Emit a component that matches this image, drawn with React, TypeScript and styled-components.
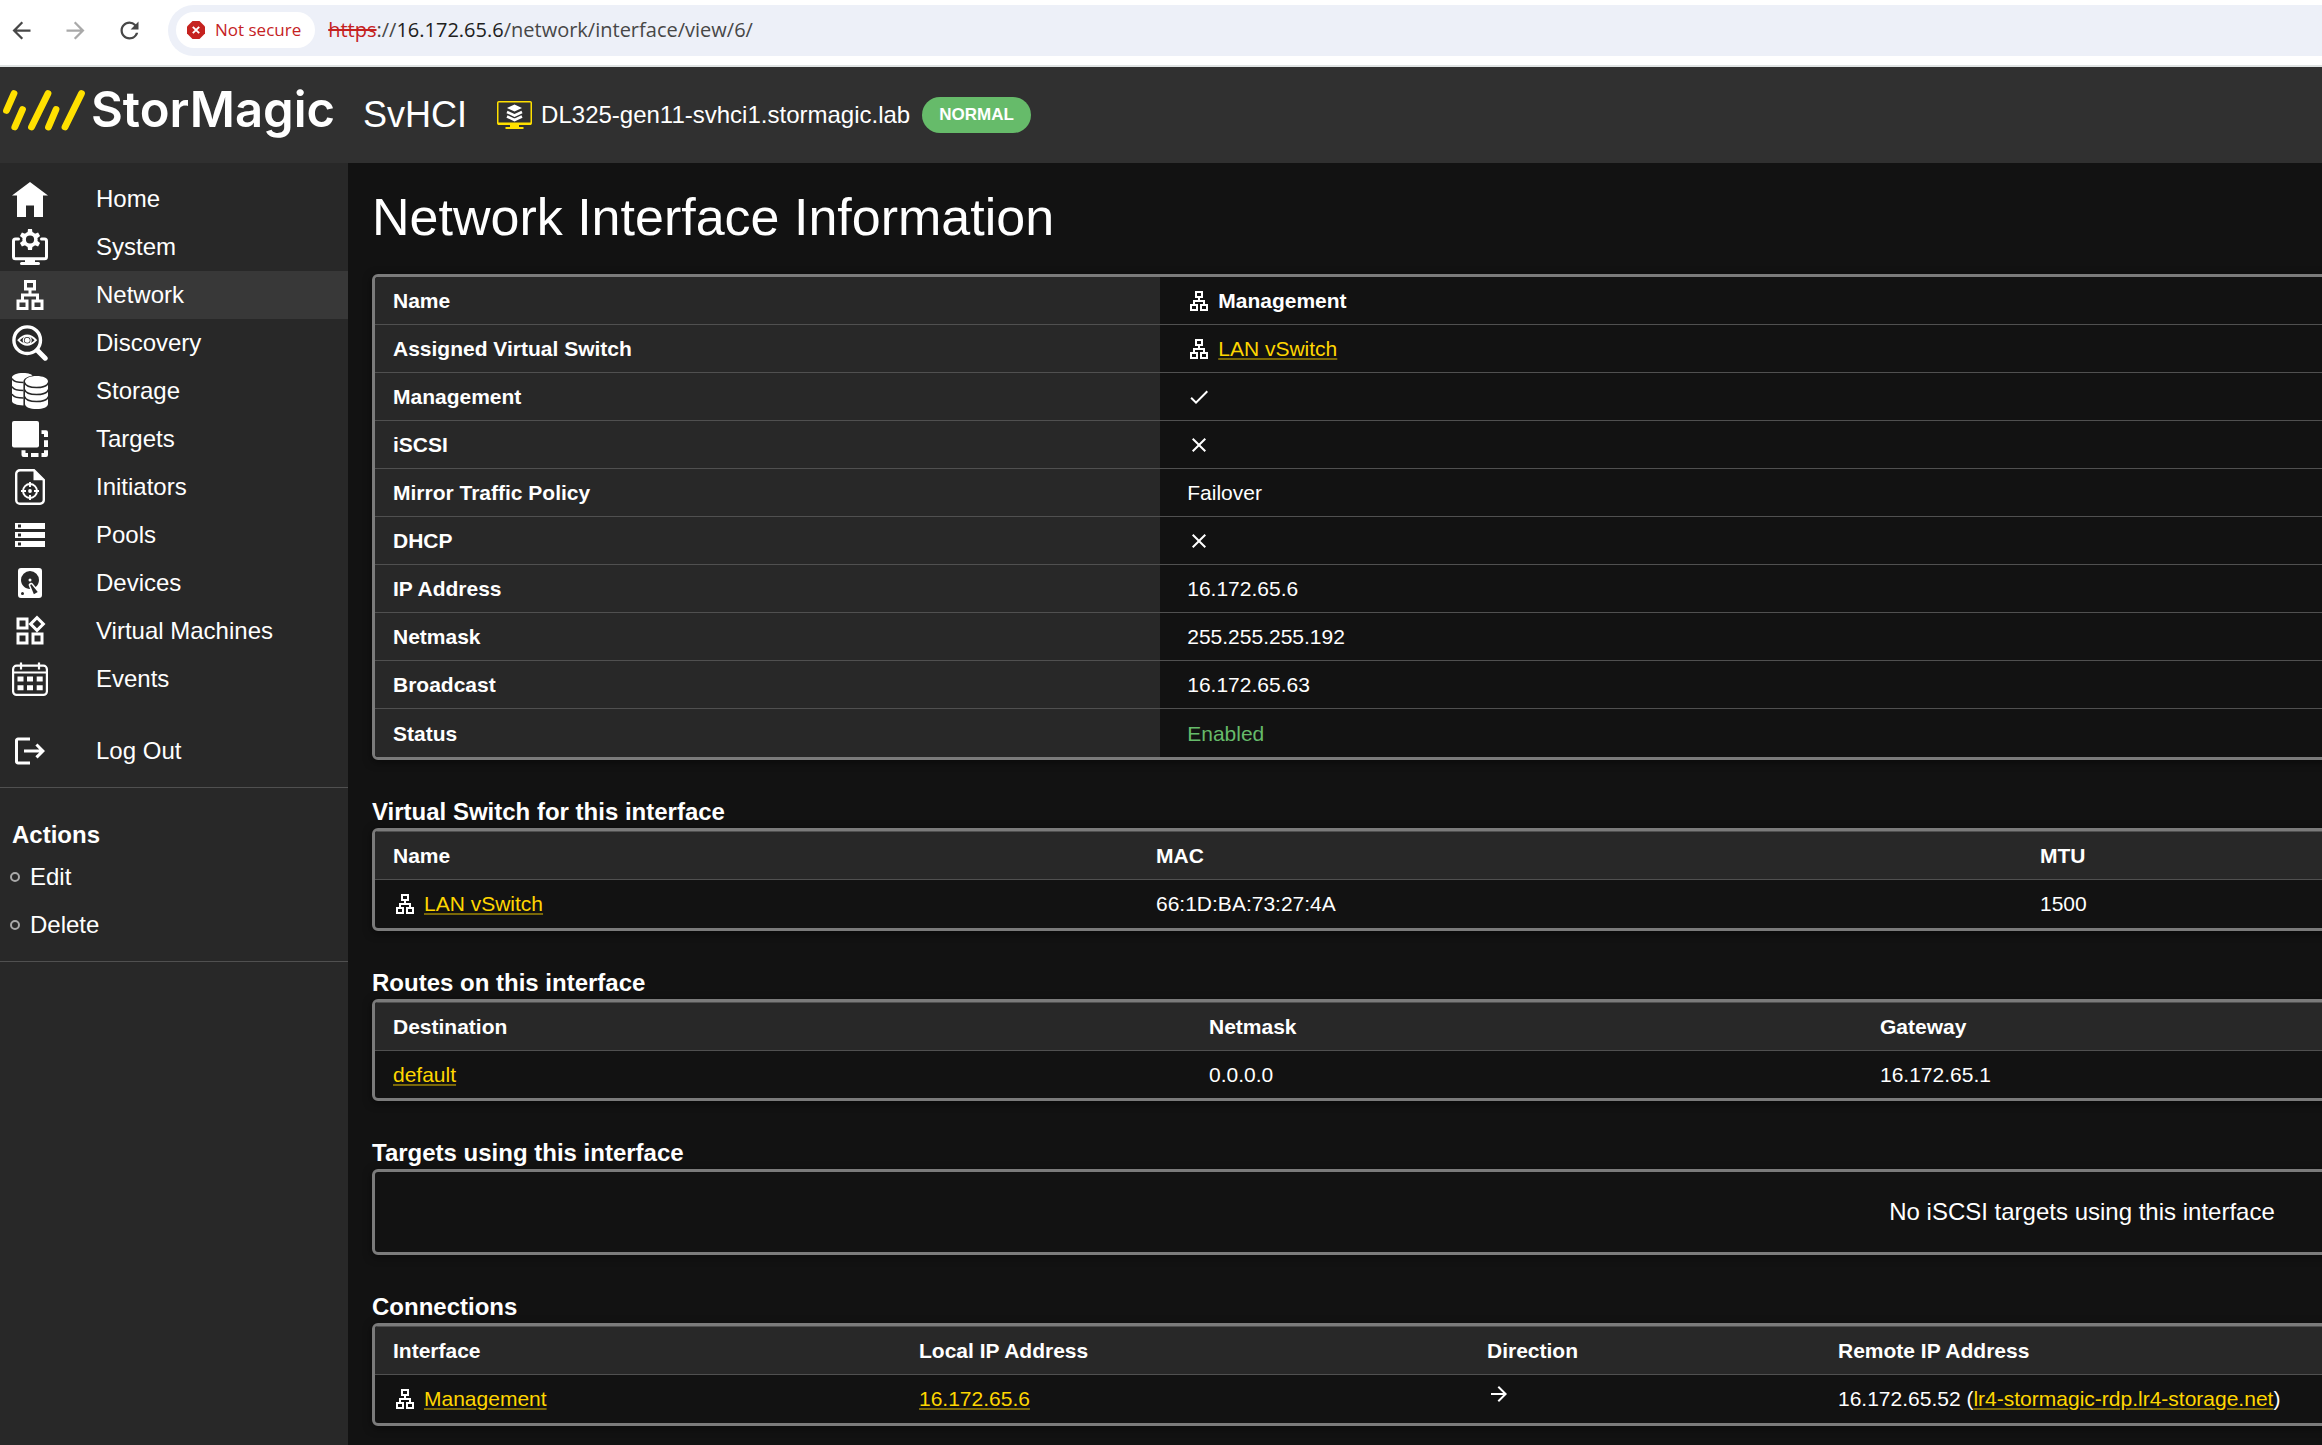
import React from "react";
import styled, { createGlobalStyle } from "styled-components";
import {
  MdArrowBack,
  MdArrowForward,
  MdCheck,
  MdClose,
  MdLogout,
  MdOutlineLan,
  MdOutlineWidgets,
  MdRefresh,
  MdStorage,
} from "react-icons/md";

const color = {
  page: "#121212",
  panel: "#282828",
  header: "#303030",
  active: "#383838",
  line: "#505050",
  frame: "#7b7b7b",
  brand: "#ffe000",
  link: "#ffd600",
  linkLine: "#7a6808",
  ok: "#66bb6a",
  danger: "#c5221f",
};

const sans = `"Liberation Sans", Arial, sans-serif`;

const GlobalStyle = createGlobalStyle`
  *, *::before, *::after { box-sizing: border-box; }
  body {
    margin: 0;
    background: ${color.page};
    color: #fff;
    font: 24px/28px ${sans};
  }
  svg { display: block; flex: none; }
`;

const Page = styled.div`
  display: flex;
  flex-direction: column;
  min-height: 100vh;
`;

/* Browser toolbar */

const BrowserBar = styled.div`
  display: flex;
  align-items: center;
  height: 67px;
  padding: 0 0 5px 8px;
  background: #fff;
  border-bottom: 2px solid #dfe3e3;
  font-family: "Open Sans", "Noto Sans", sans-serif;
`;

const ToolButton = styled.button<{ $dim?: boolean }>`
  display: grid;
  place-items: center;
  width: 27px;
  height: 27px;
  margin-right: 27px;
  padding: 0;
  border: 0;
  background: none;
  color: ${(p) => (p.$dim ? "#a9a9a9" : "#474747")};
`;

const AddressBar = styled.div`
  display: flex;
  flex: 1;
  align-items: center;
  gap: 13px;
  height: 51px;
  margin-left: -2px;
  padding-left: 8px;
  border-radius: 26px 0 0 26px;
  background: #edf0f8;
`;

const SecurityChip = styled.button`
  display: flex;
  align-items: center;
  gap: 10px;
  height: 36px;
  padding: 0 14px 0 11px;
  border: 0;
  border-radius: 18px;
  background: #fff;
  color: ${color.danger};
  font: 17px/24px "Open Sans", "Noto Sans", sans-serif;
`;

const Address = styled.div`
  color: #474747;
  font-size: 20px;
  line-height: 28px;
  white-space: nowrap;
`;

const BadScheme = styled.span`
  color: ${color.danger};
  text-decoration: line-through;
`;

const Host = styled.span`
  color: #202020;
`;

/* Product header */

const Header = styled.header`
  display: flex;
  align-items: center;
  height: 96px;
  background: ${color.header};
  white-space: nowrap;
`;

const Brand = styled.a`
  display: flex;
  align-items: center;
  gap: 3px;
  margin-right: 28px;
  padding-bottom: 10px;
  color: #fff;
  font: 600 49px/64px Inter, "Liberation Sans", sans-serif;
  text-decoration: none;
`;

const Product = styled.span`
  margin-right: 30px;
  font-size: 36px;
  line-height: 42px;
`;

const HostName = styled.span`
  margin: 0 12px 0 8px;
`;

const Badge = styled.span`
  padding: 0 17px;
  border-radius: 18px;
  background: ${color.ok};
  font-size: 17px;
  font-weight: 700;
  line-height: 36px;
`;

/* Body layout */

const Body = styled.div`
  display: flex;
  flex: 1;
`;

const Sidebar = styled.aside`
  flex: none;
  width: 348px;
  background: ${color.panel};
`;

const NavGroup = styled.ul`
  margin: 0;
  padding: 12px 0;
  border-bottom: 1px solid ${color.line};
  list-style: none;
`;

const NavItem = styled.li<{ $spaced?: boolean }>`
  margin-top: ${(p) => (p.$spaced ? 24 : 0)}px;
`;

const NavLink = styled.a<{ $active?: boolean }>`
  display: flex;
  align-items: center;
  gap: 48px;
  height: 48px;
  padding-left: 12px;
  background: ${(p) => (p.$active ? color.active : "none")};
  color: #fff;
  text-decoration: none;
`;

const Actions = styled.section`
  padding: 29px 0 12px;
  border-bottom: 1px solid ${color.line};
`;

const ActionsTitle = styled.h2`
  margin: 0;
  padding-left: 12px;
  font-size: 24px;
  line-height: 36px;
`;

const ActionList = styled.ul`
  margin: 0;
  padding: 0;
  list-style: none;
`;

const ActionLink = styled.a`
  display: flex;
  align-items: center;
  gap: 10px;
  height: 48px;
  padding-left: 10px;
  color: #fff;
  text-decoration: none;

  &::before {
    content: "";
    width: 10px;
    height: 10px;
    border: 2px solid #a8a8a8;
    border-radius: 50%;
  }
`;

const Main = styled.main`
  flex: 1;
  min-width: 0;
  overflow-x: auto;
  scrollbar-width: none;
  padding: 24px;
`;

/* The tables are laid out for an ultra-wide console and scroll sideways. */
const Content = styled.div`
  display: flex;
  flex-direction: column;
  min-width: 3420px;
`;

const Title = styled.h1`
  margin: 0 0 27px;
  font-size: 52px;
  font-weight: 400;
  line-height: 60px;
`;

const Section = styled.section`
  margin-top: 36px;
`;

const SectionTitle = styled.h2`
  margin: 0;
  font-size: 24px;
  line-height: 32px;
`;

const Frame = styled.div`
  overflow: hidden;
  border: 3px solid ${color.frame};
  border-radius: 6px;
  box-shadow: 0 2px 8px rgba(0, 0, 0, 0.5);
`;

const Table = styled.table`
  width: 100%;
  border-collapse: separate;
  border-spacing: 0;
  table-layout: fixed;
  font-size: 21px;
  line-height: 23px;
  text-align: left;
`;

const DetailLabel = styled.th`
  width: 23%;
  height: 48px;
  padding: 0 18px;
  border-bottom: 1px solid ${color.line};
  background: ${color.panel};

  tr:last-child > & { border-bottom: 0; }
`;

const DetailValue = styled.td`
  height: 48px;
  padding: 12px 27px 0;
  border-bottom: 1px solid ${color.line};
  vertical-align: top;

  tr:last-child > & {
    padding-top: 0;
    border-bottom: 0;
    vertical-align: middle;
  }
`;

const HeadCell = styled.th<{ $width?: number }>`
  width: ${(p) => (p.$width ? `${p.$width}px` : "auto")};
  height: 49px;
  padding: 0 18px;
  border: solid ${color.line};
  border-width: 1px 0;
  background: ${color.panel};
`;

const Cell = styled.td`
  padding: 12px 18px;
  vertical-align: top;
`;

const Empty = styled.p`
  margin: 0;
  line-height: 80px;
  text-align: center;
`;

const IconText = styled.span`
  display: flex;
  align-items: flex-start;
  gap: 7px;
  height: 24px;
`;

const InlineArrow = styled(MdArrowForward)`
  display: inline-block;
  vertical-align: baseline;
`;

const ArrowCell = styled(Cell)`
  padding-block: 7px;
`;

const TextLink = styled.a`
  color: ${color.link};
  text-decoration: underline 2px ${color.linkLine};
  text-underline-offset: 2px;
`;

const Enabled = styled.span`
  color: ${color.ok};
`;

/* Drawings */

const NotSecureIcon = () => (
  <svg width="18" height="18" viewBox="0 0 18 18" aria-hidden="true">
    <path d="M5.500 0h7L18 5.500v7L12.500 18h-7L0 12.500v-7z" fill={color.danger} />
    <path d="M5.800 5.800l6.400 6.400M12.200 5.800l-6.400 6.400" stroke="#fff" strokeWidth="1.900" />
  </svg>
);

const BrandMark = () => (
  <svg width="88" height="48" viewBox="0 0 88 48" aria-hidden="true">
    <path
      d="M14 7.500L6.500 24.500M22.500 23.500L14.800 41M48 7.500L31.500 41M56 23.500L48.500 41M81.500 7.500L65 41"
      fill="none"
      stroke={color.brand}
      strokeWidth="6.800"
      strokeLinecap="round"
    />
  </svg>
);

const HostIcon = () => (
  <svg width="36" height="28" viewBox="0 0 36 28" aria-hidden="true">
    <rect x=".75" y=".75" width="33.500" height="22.500" rx="1" fill="none" stroke={color.brand} strokeWidth="1.500" />
    <path d="M1 21.500h33V24H1zM13 23h9v3h4.500v2h-18v-2H13z" fill={color.brand} />
    <path d="M17.500 3.500L25 7l-7.500 3.500L10 7z" fill="#fff" />
    <path d="M10 11l7.500 3.500L25 11M10 15.500l7.500 3.500 7.500-3.500" fill="none" stroke="#fff" strokeWidth="2.500" />
  </svg>
);

const Glyph = ({ children }: { children: React.ReactNode }) => (
  <svg width="36" height="36" viewBox="0 0 36 36" fill="#fff" aria-hidden="true">
    {children}
  </svg>
);

const HomeIcon = () => (
  <Glyph>
    <path d="M18 1L36 14.500H31V36H22V24.500H14V36H5V14.500H0z" />
  </Glyph>
);

const SystemIcon = () => (
  <Glyph>
    <path
      d="M6.500 10H3.500a2 2 0 0 0-2 2v15.800a2 2 0 0 0 2 2h29a2 2 0 0 0 2-2V12a2 2 0 0 0-2-2h-3"
      fill="none"
      stroke="#fff"
      strokeWidth="3"
      strokeLinecap="round"
    />
    <path d="M13 31h10v2h3.500a1.500 1.500 0 0 1 0 3h-17a1.500 1.500 0 0 1 0-3H13z" />
    <circle cx="18" cy="10.500" r="5.900" fill="none" stroke="#fff" strokeWidth="3.600" />
    {[0, 60, 120, 180, 240, 300].map((deg) => (
      <path key={deg} d="M15.500 4L16 0h4l.5 4z" transform={`rotate(${deg} 18 10.500)`} />
    ))}
  </Glyph>
);

const DiscoveryIcon = () => (
  <Glyph>
    <circle cx="15.200" cy="15.200" r="13.300" fill="none" stroke="#fff" strokeWidth="3.400" />
    <path d="M25.500 25.500l7.700 7.700" stroke="#fff" strokeWidth="5" strokeLinecap="round" />
    <path d="M6.500 15.200Q15.200 5.800 23.900 15.200Q15.200 24.600 6.500 15.200z" fill="none" stroke="#fff" strokeWidth="1.900" />
    <circle cx="15.200" cy="15.200" r="3.900" fill="none" stroke="#fff" strokeWidth="1.300" />
    <circle cx="15.200" cy="15.200" r="2.500" />
  </Glyph>
);

const StorageIcon = () => (
  <Glyph>
    <path d="M0 4.500C0 2 5 0 11 0s9 1.500 9.500 2.600C15 3.600 11.400 6 11.400 9v23.500C5 32.300 0 30.500 0 28z" />
    <path d="M0 5.500c1 2.500 6 4 11.500 4M0 13.500c1 2.500 6 4 11.500 4M0 21c1 2.500 6 4 11.500 4" fill="none" stroke={color.panel} strokeWidth="1.500" />
    <path d="M13 8.500C13 5.200 18 3 24.500 3S36 5.200 36 8.500V31c0 3-5 5-11.500 5S13 34 13 31z" />
    <path
      d="M12.500 9.500c1 3.200 6 5 12 5s11-1.800 12-5M12.500 16.500c1 3.200 6 5 12 5s11-1.800 12-5M12.500 23.500c1 3.200 6 5 12 5s11-1.800 12-5"
      fill="none"
      stroke={color.panel}
      strokeWidth="1.500"
    />
  </Glyph>
);

const TargetsIcon = () => (
  <Glyph>
    <rect width="27" height="26.500" rx="2" />
    <path d="M29.500 9.300H34a2 2 0 0 1 2 2v4.700h-4v-3h-2.500zM32 19.300h4v6.700h-4zM32 29.300h4V34a2 2 0 0 1-2 2h-4.500v-4H32zM19 32h7.500v4H19zM9.500 29.300h4V32H16v4h-4.500a2 2 0 0 1-2-2z" />
  </Glyph>
);

const InitiatorsIcon = () => (
  <Glyph>
    <path
      d="M22 1.200H8a3.800 3.800 0 0 0-3.800 3.800v26a3.800 3.800 0 0 0 3.800 3.800h20a3.800 3.800 0 0 0 3.800-3.800V11z"
      fill="none"
      stroke="#fff"
      strokeWidth="2.400"
    />
    <path d="M21.500 1l11 10.300h-11z" />
    <circle cx="18" cy="22" r="7" fill="none" stroke="#fff" strokeWidth="1.900" />
    <path d="M18 13v5M18 26v5M9 22h5M22 22h5" stroke="#fff" strokeWidth="1.900" />
    <circle cx="18" cy="22" r="1.900" />
  </Glyph>
);

const DevicesIcon = () => (
  <svg width="36" height="36" viewBox="0 0 24 24" fill="#fff" aria-hidden="true">
    <path d="M6,2H18A2,2 0 0,1 20,4V20A2,2 0 0,1 18,22H6A2,2 0 0,1 4,20V4A2,2 0 0,1 6,2M12,4A6,6 0 0,0 6,10C6,13.31 8.69,16 12.1,16L11.22,13.77C10.95,13.29 11.11,12.68 11.59,12.4L12.45,11.9C12.93,11.63 13.54,11.79 13.82,12.27L15.74,14.69C17.12,13.59 18,11.9 18,10A6,6 0 0,0 12,4M12,9A1,1 0 0,1 13,10A1,1 0 0,1 12,11A1,1 0 0,1 11,10A1,1 0 0,1 12,9M7,18A1,1 0 0,0 6,19A1,1 0 0,0 7,20A1,1 0 0,0 8,19A1,1 0 0,0 7,18M12.09,13.27L14.58,19.58L17.17,18.08L12.95,12.77L12.09,13.27Z" />
  </svg>
);

const EventsIcon = () => (
  <Glyph>
    <rect x="1.100" y="4.700" width="33.800" height="29.200" rx="3.500" fill="none" stroke="#fff" strokeWidth="2.200" />
    <path d="M1 11.500h34" stroke="#fff" strokeWidth="2" />
    <path d="M9 1.500v7M27 1.500v7" stroke="#fff" strokeWidth="2.200" />
    <path d="M5.500 15.500h6v5h-6zM15 15.500h6v5h-6zM24.700 15.500h6v5h-6zM5.500 24.300h6v5h-6zM15 24.300h6v5h-6zM24.700 24.300h6v5h-6z" />
  </Glyph>
);

/* Data */

type NavEntry = { label: string; icon: React.ReactNode; active?: boolean; spaced?: boolean };

const nav: NavEntry[] = [
  { label: "Home", icon: <HomeIcon /> },
  { label: "System", icon: <SystemIcon /> },
  { label: "Network", icon: <MdOutlineLan size={36} />, active: true },
  { label: "Discovery", icon: <DiscoveryIcon /> },
  { label: "Storage", icon: <StorageIcon /> },
  { label: "Targets", icon: <TargetsIcon /> },
  { label: "Initiators", icon: <InitiatorsIcon /> },
  { label: "Pools", icon: <MdStorage size={36} /> },
  { label: "Devices", icon: <DevicesIcon /> },
  { label: "Virtual Machines", icon: <MdOutlineWidgets size={36} /> },
  { label: "Events", icon: <EventsIcon /> },
  { label: "Log Out", icon: <MdLogout size={36} />, spaced: true },
];

const WithLan = ({ children }: { children: React.ReactNode }) => (
  <IconText>
    <MdOutlineLan size={24} />
    {children}
  </IconText>
);

const Flag = ({ on }: { on: boolean }) => (
  <IconText role="img" aria-label={on ? "Yes" : "No"}>
    {on ? <MdCheck size={24} /> : <MdClose size={24} />}
  </IconText>
);

const details: [string, React.ReactNode][] = [
  ["Name", <WithLan><b>Management</b></WithLan>],
  ["Assigned Virtual Switch", <WithLan><TextLink href="#vswitch">LAN vSwitch</TextLink></WithLan>],
  ["Management", <Flag on />],
  ["iSCSI", <Flag on={false} />],
  ["Mirror Traffic Policy", "Failover"],
  ["DHCP", <Flag on={false} />],
  ["IP Address", "16.172.65.6"],
  ["Netmask", "255.255.255.192"],
  ["Broadcast", "16.172.65.63"],
  ["Status", <Enabled>Enabled</Enabled>],
];

type Column = { label: string; width?: number };

const DataTable = ({ columns, children }: { columns: Column[]; children: React.ReactNode }) => (
  <Frame>
    <Table>
      <thead>
        <tr>
          {columns.map((c) => (
            <HeadCell key={c.label} scope="col" $width={c.width}>
              {c.label}
            </HeadCell>
          ))}
        </tr>
      </thead>
      <tbody>{children}</tbody>
    </Table>
  </Frame>
);

export default function App() {
  return (
    <Page>
      <GlobalStyle />
      <BrowserBar>
        <ToolButton aria-label="Back"><MdArrowBack size={27} /></ToolButton>
        <ToolButton aria-label="Forward" $dim><MdArrowForward size={27} /></ToolButton>
        <ToolButton aria-label="Reload"><MdRefresh size={27} /></ToolButton>
        <AddressBar>
          <SecurityChip><NotSecureIcon />Not secure</SecurityChip>
          <Address>
            <BadScheme>https</BadScheme>://<Host>16.172.65.6</Host>/network/interface/view/6/
          </Address>
        </AddressBar>
      </BrowserBar>

      <Header>
        <Brand href="#home"><BrandMark />StorMagic</Brand>
        <Product>SvHCI</Product>
        <HostIcon />
        <HostName>DL325-gen11-svhci1.stormagic.lab</HostName>
        <Badge>NORMAL</Badge>
      </Header>

      <Body>
        <Sidebar>
          <nav>
            <NavGroup>
              {nav.map((n) => (
                <NavItem key={n.label} $spaced={n.spaced}>
                  <NavLink href={`#${n.label}`} $active={n.active}>
                    {n.icon}
                    {n.label}
                  </NavLink>
                </NavItem>
              ))}
            </NavGroup>
          </nav>
          <Actions>
            <ActionsTitle>Actions</ActionsTitle>
            <ActionList>
              <li><ActionLink href="#edit">Edit</ActionLink></li>
              <li><ActionLink href="#delete">Delete</ActionLink></li>
            </ActionList>
          </Actions>
        </Sidebar>

        <Main>
          <Content>
            <Title>Network Interface Information</Title>
            <Frame>
              <Table>
                <tbody>
                  {details.map(([label, value]) => (
                    <tr key={label}>
                      <DetailLabel scope="row">{label}</DetailLabel>
                      <DetailValue>{value}</DetailValue>
                    </tr>
                  ))}
                </tbody>
              </Table>
            </Frame>

            <Section>
              <SectionTitle>Virtual Switch for this interface</SectionTitle>
              <DataTable columns={[{ label: "Name", width: 763 }, { label: "MAC", width: 884 }, { label: "MTU" }]}>
                <tr>
                  <Cell><WithLan><TextLink href="#vswitch">LAN vSwitch</TextLink></WithLan></Cell>
                  <Cell>66:1D:BA:73:27:4A</Cell>
                  <Cell>1500</Cell>
                </tr>
              </DataTable>
            </Section>

            <Section>
              <SectionTitle>Routes on this interface</SectionTitle>
              <DataTable columns={[{ label: "Destination", width: 816 }, { label: "Netmask", width: 671 }, { label: "Gateway" }]}>
                <tr>
                  <Cell><TextLink href="#default">default</TextLink></Cell>
                  <Cell>0.0.0.0</Cell>
                  <Cell>16.172.65.1</Cell>
                </tr>
              </DataTable>
            </Section>

            <Section>
              <SectionTitle>Targets using this interface</SectionTitle>
              <Frame>
                <Empty>No iSCSI targets using this interface</Empty>
              </Frame>
            </Section>

            <Section>
              <SectionTitle>Connections</SectionTitle>
              <DataTable
                columns={[
                  { label: "Interface", width: 526 },
                  { label: "Local IP Address", width: 568 },
                  { label: "Direction", width: 351 },
                  { label: "Remote IP Address" },
                ]}
              >
                <tr>
                  <Cell><WithLan><TextLink href="#management">Management</TextLink></WithLan></Cell>
                  <Cell><TextLink href="#local">16.172.65.6</TextLink></Cell>
                  <ArrowCell><InlineArrow size={24} title="Outgoing" /></ArrowCell>
                  <Cell>
                    16.172.65.52 (<TextLink href="#remote">lr4-stormagic-rdp.lr4-storage.net</TextLink>)
                  </Cell>
                </tr>
              </DataTable>
            </Section>
          </Content>
        </Main>
      </Body>
    </Page>
  );
}
